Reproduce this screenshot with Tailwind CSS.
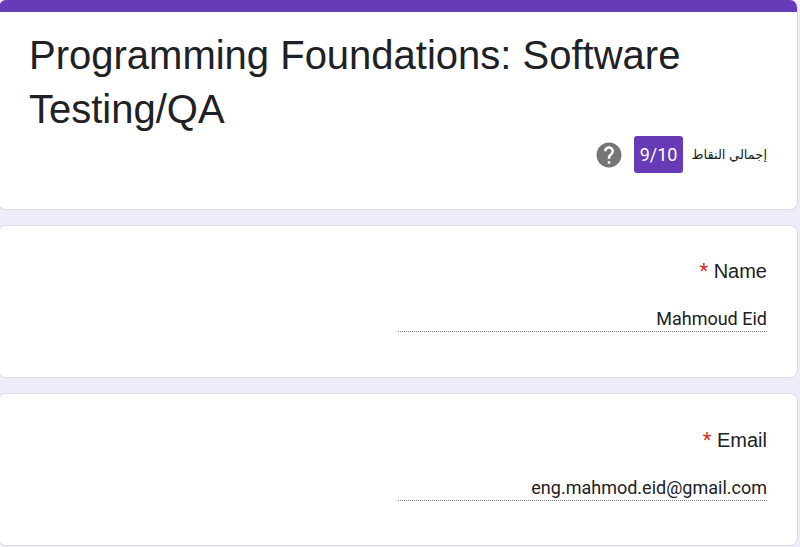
<!DOCTYPE html>
<html lang="ar" dir="rtl">
<head>
<meta charset="utf-8">
<meta name="viewport" content="width=device-width, initial-scale=1">
<title>Programming Foundations: Software Testing/QA</title>
<script src="https://cdn.jsdelivr.net/npm/@tailwindcss/browser@4"></script>
</head>
<body class="overflow-x-hidden bg-[#f0ebf8] font-[Roboto,'Liberation_Sans',sans-serif] text-[#202124]">
<main class="mr-0.5 -ml-0.5 flex flex-col gap-[15px]">
  <header class="overflow-hidden rounded-lg border border-t-0 border-[#dadce0] bg-white">
    <div class="h-3 bg-[#673ab7]"></div>
    <div class="px-[30px] pt-4 pb-9">
      <h1 dir="ltr" class="font-['Liberation_Sans',Arial,sans-serif] text-[40px] leading-[54px]">Programming Foundations: Software Testing/QA</h1>
      <div class="flex items-center">
        <span class="font-['Liberation_Sans','DejaVu_Sans',sans-serif] text-[13px]">إجمالي النقاط</span>
        <span dir="ltr" class="mr-2 rounded-[3px] bg-[#673ab7] px-1.5 py-[5px] text-lg leading-[27px] text-white">9/10</span>
        <button type="button" aria-label="مساعدة" class="mr-2.5 text-[#757575]">
          <svg class="size-[30px]" viewBox="0 0 24 24" fill="currentColor" aria-hidden="true"><path d="M12 2C6.48 2 2 6.48 2 12s4.48 10 10 10 10-4.48 10-10S17.52 2 12 2zm1 17h-2v-2h2v2zm2.07-7.75-.9.92C13.45 12.9 13 13.5 13 15h-2v-.5c0-1.1.45-2.1 1.17-2.83l1.24-1.26c.37-.36.59-.86.59-1.41 0-1.1-.9-2-2-2s-2 .9-2 2H8c0-2.21 1.79-4 4-4s4 1.79 4 4c0 .88-.36 1.68-.93 2.25z"/></svg>
        </button>
      </div>
    </div>
  </header>
  <section class="rounded-lg border border-[#dadce0] bg-white px-[30px] pt-[30px] pb-[45px]">
    <label for="name" class="block font-['Liberation_Sans',Arial,sans-serif] text-xl leading-[30px]">Name <span class="font-[Roboto,sans-serif] text-[#d93025]">*</span></label>
    <input id="name" type="text" readonly value="Mahmoud Eid" class="mt-[18px] block h-7 w-1/2 border-b border-dotted border-[#80868b] pt-0.5 text-lg leading-[25px] outline-none">
  </section>
  <section class="rounded-lg border border-[#dadce0] bg-white px-[30px] pt-[31px] pb-11">
    <label for="email" class="block font-['Liberation_Sans',Arial,sans-serif] text-xl leading-[30px]">Email <span class="font-[Roboto,sans-serif] text-[#d93025]">*</span></label>
    <input id="email" type="email" readonly value="eng.mahmod.eid@gmail.com" class="mt-[18px] block h-7 w-1/2 border-b border-dotted border-[#80868b] pt-0.5 text-lg leading-[25px] outline-none">
  </section>
</main>
</body>
</html>
